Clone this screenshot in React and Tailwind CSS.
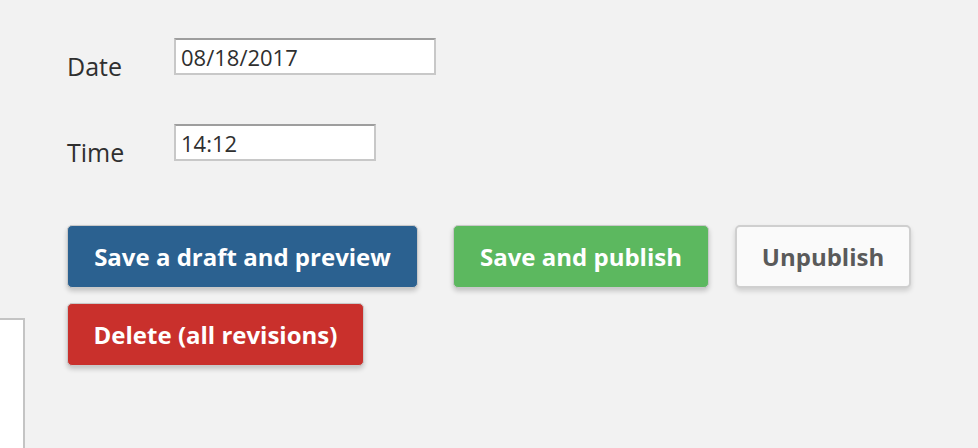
export default function App() {
  const font = { fontFamily: '"Open Sans", "Liberation Sans", sans-serif' };
  return (
    <div className="relative h-[448px] w-[978px] overflow-hidden bg-[#f2f2f2] text-[#333]" style={font}>
      <div className="absolute left-0 top-[318px] h-[200px] w-[25px] border-r-2 border-t-2 border-[#c4c4c4] bg-white" />

      <div className="pl-[67px] pt-[38px]">
        <div className="flex h-[42px] items-start">
          <label className="mt-[12px] w-[107px] text-[25px] font-medium leading-[32px] text-[#2f2f2f]">Date</label>
          <input
            type="text"
            defaultValue="08/18/2017"
            className="h-[37px] w-[262px] border-2 border-[#c8c8c8] border-t-[#9e9e9e] bg-white px-[5px] text-[22px] text-[#2f2f2f] outline-none"
          />
        </div>

        <div className="mt-[44px] flex h-[42px] items-start">
          <label className="mt-[12px] w-[107px] text-[25px] font-medium leading-[32px] text-[#2f2f2f]">Time</label>
          <input
            type="text"
            defaultValue="14:12"
            className="h-[37px] w-[202px] border-2 border-[#c8c8c8] border-t-[#9e9e9e] bg-white px-[5px] text-[22px] text-[#2f2f2f] outline-none"
          />
        </div>

        <div className="mt-[59px] flex">
          <button className="h-[63px] w-[351px] rounded-[5px] border border-[#c9c9c9] bg-[#2b6190] text-[24px] font-bold text-white shadow-[0_3px_5px_rgba(0,0,0,0.2)]">
            Save a draft and preview
          </button>
          <button className="ml-[35px] h-[63px] w-[256px] rounded-[5px] border border-[#c9c9c9] bg-[#5cb85f] text-[24px] font-bold text-white shadow-[0_3px_5px_rgba(0,0,0,0.2)]">
            Save and publish
          </button>
          <button className="ml-[26px] h-[63px] w-[176px] rounded-[5px] border-2 border-[#cfcfcf] bg-[#fafafa] text-[24px] font-bold text-[#5a5a5a] shadow-[0_3px_5px_rgba(0,0,0,0.15)]">
            Unpublish
          </button>
        </div>

        <div className="mt-[15px] flex">
          <button className="h-[63px] w-[297px] rounded-[5px] border border-[#c9c9c9] bg-[#c9302c] text-[24px] font-bold text-white shadow-[0_3px_5px_rgba(0,0,0,0.2)]">
            Delete (all revisions)
          </button>
        </div>
      </div>
    </div>
  );
}
